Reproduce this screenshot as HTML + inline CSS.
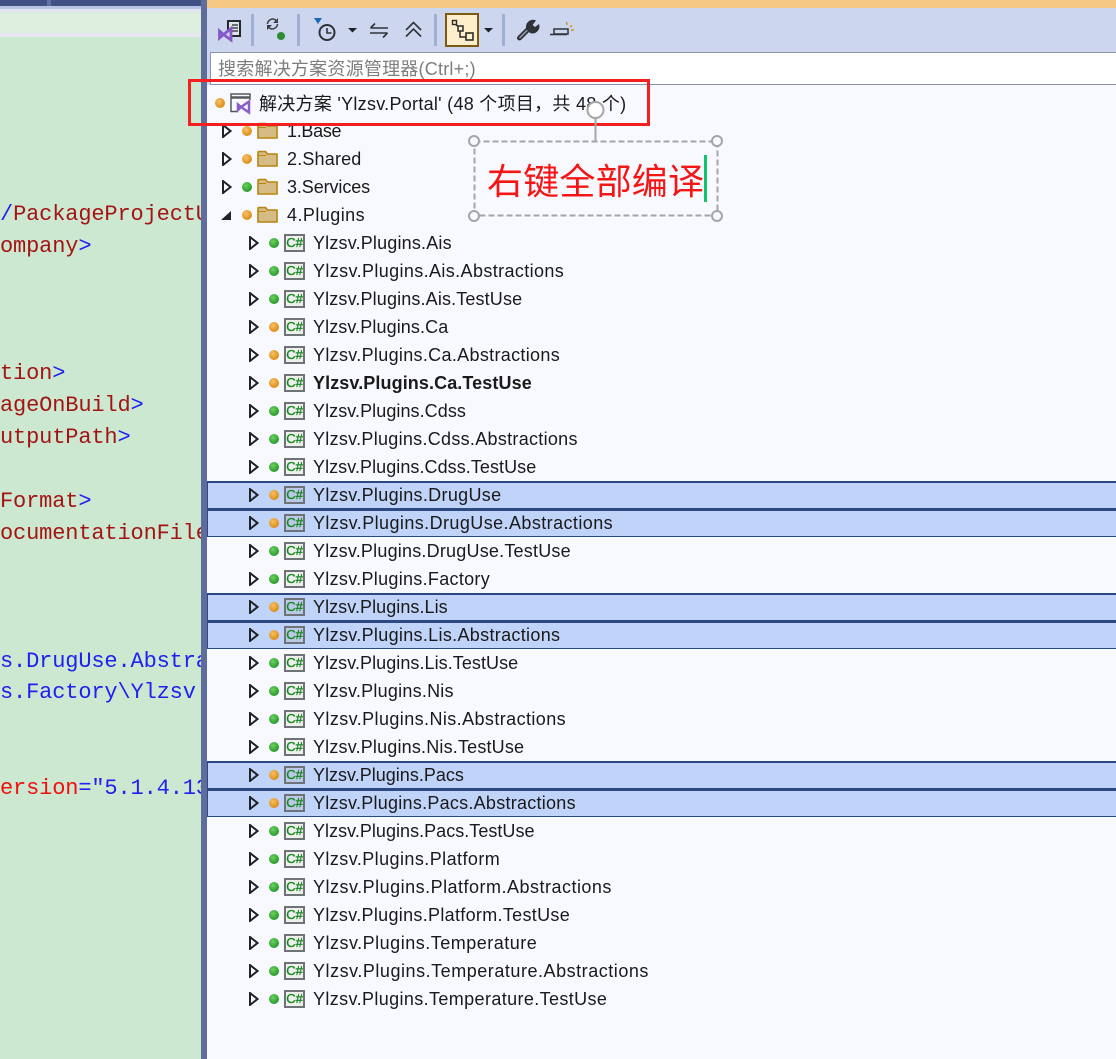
<!DOCTYPE html>
<html lang="zh"><head><meta charset="utf-8"><title>解决方案资源管理器</title>
<style>
html,body{margin:0;padding:0;width:1116px;height:1059px;overflow:hidden;background:#f8f9ff}
body{position:relative;font-family:"Liberation Sans","Noto Sans CJK SC",sans-serif;color:#1a1a1a}
div,span,i,svg{position:absolute;display:block}
#left{left:0;top:0;width:201px;height:1059px;background:#cde8d0;overflow:hidden}
.c{left:0;font:22px/32px "Liberation Mono",monospace;white-space:pre;color:#a31515;letter-spacing:-.15px}
.c b{position:static;font-weight:normal;color:#2020f0}
.c em{font-style:normal;color:#f01010}
.r{left:207px;width:909px;height:28px}
.r svg.a{left:41px;top:7px;width:11px;height:14px}
.r i{left:62px;top:9px;width:10px;height:10px;border-radius:50%}
.g{background:radial-gradient(circle at 40% 35%,#6ad35e,#2c9a2c 70%)}
.o{background:radial-gradient(circle at 40% 35%,#f7c163,#db8f1b 70%)}
.cs{left:77px;top:5px;width:17px;height:14px;border:2px solid #6f7378;background:#eef0ee;color:#18881f;font:13px/14px "Liberation Sans",sans-serif;-webkit-text-stroke:.35px #18881f;text-align:center}
.t{left:106px;top:0;font-size:18px;line-height:28px;white-space:nowrap;letter-spacing:.18px}
.r.s{background:#c0d3f8;height:25px;border-top:2px solid #2c4a80;border-bottom:1px solid #2c4a80;box-shadow:inset 1px 0 #2c4a80}
.r.s svg.a{top:5px}.r.s i{top:7px}.r.s .cs{top:3px;background:#b9c9e6}.r.s .t{top:-2px}
.r.f svg.a{left:14px}.r.f i{left:35px}.f svg.fd{left:50px;top:5px;width:21px;height:17px}.r.f .t{left:80px}
</style></head><body>
<svg width="0" height="0" style="position:absolute"><defs>
<symbol id="ar" viewBox="0 0 11 14"><path d="M2 1 L9.500 7 L2 13Z" fill="none" stroke="#1f2328" stroke-width="2"/></symbol>
<symbol id="fo" viewBox="0 0 21 17"><path d="M1 2 V16 H20 V4 H10.500 L8.500 1.500 H2Z" fill="#d4bc84" stroke="#b8860f" stroke-width="1.600"/><path d="M1 5.500 H9" stroke="#b8860f" stroke-width="1"/></symbol>
</defs></svg>

<div id="left">
<div style="left:0;top:0;width:201px;height:6px;background:#3f5185"></div>
<div style="left:47px;top:0;width:4px;height:6px;background:#5f71a5"></div>
<div style="left:0;top:6px;width:201px;height:3px;background:#b9c3e6"></div>
<div style="left:0;top:9px;width:201px;height:3px;background:#e2e5f0"></div>
<div style="left:0;top:12px;width:201px;height:21px;background:#dcefdf"></div>
<div style="left:0;top:33px;width:201px;height:4px;background:#e8e8f2"></div>
<div class="c" style="top:199px"><b>/</b>PackageProjectU</div>
<div class="c" style="top:231px">ompany<b>&gt;</b></div>
<div class="c" style="top:358px">tion<b>&gt;</b></div>
<div class="c" style="top:390px">ageOnBuild<b>&gt;</b></div>
<div class="c" style="top:422px">utputPath<b>&gt;</b></div>
<div class="c" style="top:486px">Format<b>&gt;</b></div>
<div class="c" style="top:518px">ocumentationFile</div>
<div class="c" style="top:646px"><b>s.DrugUse.Abstra</b></div>
<div class="c" style="top:677px"><b>s.Factory\Ylzsv.</b></div>
<div class="c" style="top:773px"><em>ersion</em><b>=″5.1.4.13</b></div>
</div>
<div style="left:201px;top:0;width:6px;height:1059px;background:#5e6d9c"></div>

<div style="left:207px;top:0;width:909px;height:8px;background:#f3c983"></div>
<div style="left:207px;top:8px;width:909px;height:44px;background:#ccd6ef"></div>
<div style="left:207px;top:52px;width:909px;height:36px;background:#ccd6ef"></div>
<div style="left:210px;top:52px;width:906px;height:31px;background:#fff;border-top:1px solid #8d94aa;border-left:1px solid #8d94aa;border-bottom:1px solid #8d94aa"></div>
<div style="left:218px;top:57px;font-size:18px;line-height:24px;color:#7d7d7d;white-space:nowrap;letter-spacing:.23px">搜索解决方案资源管理器(Ctrl+;)</div>

<svg style="left:207px;top:8px" width="400" height="44" viewBox="207 8 400 44">
<rect x="251" y="14" width="3" height="32" fill="#9fb0d4"/><rect x="297" y="14" width="3" height="32" fill="#9fb0d4"/><rect x="434" y="14" width="3" height="32" fill="#9fb0d4"/><rect x="502" y="14" width="3" height="32" fill="#9fb0d4"/>
<rect x="228" y="21" width="12" height="15" fill="#dfe3ea" stroke="#26282c" stroke-width="2"/><path d="M232 25h6M232 28h6M232 31h6" stroke="#26282c" stroke-width="1.300"/>
<path d="M219.500 31 L223.500 34.500 L231 28.500 V40 L223.500 34.500 L219.500 38Z" fill="#ccd6ef" stroke="#8657c9" stroke-width="2.800"/>
<path d="M267.500 24 A5.200 5.200 0 0 1 276 20.300 M277.500 24 A5.200 5.200 0 0 1 269 27.700" fill="none" stroke="#3b3f44" stroke-width="1.500"/><path d="M278 18v5h-5zM267 30v-5h5z" fill="#3b3f44"/>
<circle cx="281" cy="36" r="4" fill="#2e8b36"/>
<path d="M314 18h8l-4 6z" fill="#1f68b4"/>
<circle cx="327" cy="32.500" r="7.500" fill="#ccd6ef" stroke="#2f3338" stroke-width="2"/><path d="M327 28v5h4.500" fill="none" stroke="#2f3338" stroke-width="1.600"/>
<path d="M348 28h9l-4.500 4.500z" fill="#1f2328"/>
<path d="M370.500 28H388M375 23.500L370.500 28M370 33H387.500M383 37.500L387.500 33" fill="none" stroke="#2f3338" stroke-width="1.600"/>
<path d="M406 30L413.500 22.500L421 30M406 36.500L413.500 29L421 36.500" fill="none" stroke="#2f3338" stroke-width="1.600"/>
<rect x="446" y="14" width="32" height="32" fill="#ffeecb" stroke="#7c5a12" stroke-width="2"/>
<path d="M454 23L460 28V37H466" fill="none" stroke="#2b2b2b" stroke-width="1.500"/><rect x="452.500" y="20.500" width="4" height="4" fill="#ffeecb" stroke="#2b2b2b" stroke-width="1.400"/><rect x="458" y="26" width="5" height="5" fill="#ffeecb" stroke="#2b2b2b" stroke-width="1.500"/><rect x="466" y="33" width="7" height="7" fill="#ffeecb" stroke="#2b2b2b" stroke-width="1.600"/>
<path d="M484 28h9l-4.500 4.500z" fill="#1f2328"/>
<path d="M519.500 38L531 26.500" stroke="#2f3338" stroke-width="5" stroke-linecap="round"/><path d="M519.500 38L530 27.500" stroke="#9aa2b0" stroke-width="1.500"/>
<path d="M536 20.500 A7 7 0 0 0 526.500 29.500 L530 33 A7 7 0 0 0 539 24 L535 27 L532.500 25Z" fill="#2f3338"/>
<rect x="554" y="29" width="14" height="5" fill="#ccd6ef" stroke="#2f3338" stroke-width="1.500"/><path d="M550 34.500h17" stroke="#2f3338" stroke-width="1.500"/>
<path d="M566.500 22l.5 3M570 27l2-1.500M571 30h3" stroke="#c9962b" stroke-width="1.500"/>
</svg>

<div style="left:207px;top:85px;width:909px;height:974px;background:#f8f9ff"></div>

<div class="r" style="top:90px;height:28px"><i class="o" style="left:8px;top:8px"></i>
<svg style="left:23px;top:3px" width="22" height="22" viewBox="0 0 22 22"><path d="M8 18.500H1V1H20V7" fill="none" stroke="#55595f" stroke-width="1.500"/><path d="M1 4.500H20" stroke="#55595f" stroke-width="2.500"/><path d="M8 11.500L11 14L19 8.500V19.500L11 14L8 17Z" fill="none" stroke="#8a5fc8" stroke-width="2.500"/></svg>
<div class="t" style="left:52px;top:0;letter-spacing:.28px">解决方案 'Ylzsv.Portal' (48 个项目，共 48 个)</div></div>

<div class="r f" style="top:117px"><svg class="a"><use href="#ar"/></svg><i class="o"></i><svg class="fd"><use href="#fo"/></svg><div class="t" style="letter-spacing:-.3px">1.Base</div></div>
<div class="r f" style="top:145px"><svg class="a"><use href="#ar"/></svg><i class="o"></i><svg class="fd"><use href="#fo"/></svg><div class="t">2.Shared</div></div>
<div class="r f" style="top:173px"><svg class="a"><use href="#ar"/></svg><i class="g"></i><svg class="fd"><use href="#fo"/></svg><div class="t" style="letter-spacing:-.1px">3.Services</div></div>
<div class="r f" style="top:201px"><svg class="a" viewBox="0 0 11 14"><path d="M0 12 L10 3 V12Z" fill="#1f2328"/></svg><i class="o"></i><svg class="fd"><use href="#fo"/></svg><div class="t" style="letter-spacing:.45px">4.Plugins</div></div>

<div class="r" style="top:229px"><svg class="a"><use href="#ar"/></svg><i class="g"></i><div class="cs">C#</div><div class="t">Ylzsv.Plugins.Ais</div></div>
<div class="r" style="top:257px"><svg class="a"><use href="#ar"/></svg><i class="g"></i><div class="cs">C#</div><div class="t" style="letter-spacing:.38px">Ylzsv.Plugins.Ais.Abstractions</div></div>
<div class="r" style="top:285px"><svg class="a"><use href="#ar"/></svg><i class="g"></i><div class="cs">C#</div><div class="t" style="letter-spacing:.14px">Ylzsv.Plugins.Ais.TestUse</div></div>
<div class="r" style="top:313px"><svg class="a"><use href="#ar"/></svg><i class="o"></i><div class="cs">C#</div><div class="t" style="letter-spacing:.1px">Ylzsv.Plugins.Ca</div></div>
<div class="r" style="top:341px"><svg class="a"><use href="#ar"/></svg><i class="o"></i><div class="cs">C#</div><div class="t" style="letter-spacing:.32px">Ylzsv.Plugins.Ca.Abstractions</div></div>
<div class="r" style="top:369px"><svg class="a"><use href="#ar"/></svg><i class="o"></i><div class="cs">C#</div><div class="t" style="font-weight:bold;letter-spacing:.1px">Ylzsv.Plugins.Ca.TestUse</div></div>
<div class="r" style="top:397px"><svg class="a"><use href="#ar"/></svg><i class="g"></i><div class="cs">C#</div><div class="t" style="letter-spacing:.07px">Ylzsv.Plugins.Cdss</div></div>
<div class="r" style="top:425px"><svg class="a"><use href="#ar"/></svg><i class="g"></i><div class="cs">C#</div><div class="t" style="letter-spacing:.29px">Ylzsv.Plugins.Cdss.Abstractions</div></div>
<div class="r" style="top:453px"><svg class="a"><use href="#ar"/></svg><i class="g"></i><div class="cs">C#</div><div class="t" style="letter-spacing:.06px">Ylzsv.Plugins.Cdss.TestUse</div></div>
<div class="r s" style="top:481px"><svg class="a"><use href="#ar"/></svg><i class="o"></i><div class="cs">C#</div><div class="t" style="letter-spacing:.32px">Ylzsv.Plugins.DrugUse</div></div>
<div class="r s" style="top:509px"><svg class="a"><use href="#ar"/></svg><i class="o"></i><div class="cs">C#</div><div class="t" style="letter-spacing:.42px">Ylzsv.Plugins.DrugUse.Abstractions</div></div>
<div class="r" style="top:537px"><svg class="a"><use href="#ar"/></svg><i class="g"></i><div class="cs">C#</div><div class="t" style="letter-spacing:.21px">Ylzsv.Plugins.DrugUse.TestUse</div></div>
<div class="r" style="top:565px"><svg class="a"><use href="#ar"/></svg><i class="g"></i><div class="cs">C#</div><div class="t" style="letter-spacing:.3px">Ylzsv.Plugins.Factory</div></div>
<div class="r s" style="top:593px"><svg class="a"><use href="#ar"/></svg><i class="o"></i><div class="cs">C#</div><div class="t" style="letter-spacing:.06px">Ylzsv.Plugins.Lis</div></div>
<div class="r s" style="top:621px"><svg class="a"><use href="#ar"/></svg><i class="o"></i><div class="cs">C#</div><div class="t" style="letter-spacing:.32px">Ylzsv.Plugins.Lis.Abstractions</div></div>
<div class="r" style="top:649px"><svg class="a"><use href="#ar"/></svg><i class="g"></i><div class="cs">C#</div><div class="t" style="letter-spacing:.06px">Ylzsv.Plugins.Lis.TestUse</div></div>
<div class="r" style="top:677px"><svg class="a"><use href="#ar"/></svg><i class="g"></i><div class="cs">C#</div><div class="t" style="letter-spacing:.24px">Ylzsv.Plugins.Nis</div></div>
<div class="r" style="top:705px"><svg class="a"><use href="#ar"/></svg><i class="g"></i><div class="cs">C#</div><div class="t" style="letter-spacing:.41px">Ylzsv.Plugins.Nis.Abstractions</div></div>
<div class="r" style="top:733px"><svg class="a"><use href="#ar"/></svg><i class="g"></i><div class="cs">C#</div><div class="t">Ylzsv.Plugins.Nis.TestUse</div></div>
<div class="r s" style="top:761px"><svg class="a"><use href="#ar"/></svg><i class="o"></i><div class="cs">C#</div><div class="t" style="letter-spacing:.01px">Ylzsv.Plugins.Pacs</div></div>
<div class="r s" style="top:789px"><svg class="a"><use href="#ar"/></svg><i class="o"></i><div class="cs">C#</div><div class="t" style="letter-spacing:.26px">Ylzsv.Plugins.Pacs.Abstractions</div></div>
<div class="r" style="top:817px"><svg class="a"><use href="#ar"/></svg><i class="g"></i><div class="cs">C#</div><div class="t" style="letter-spacing:.03px">Ylzsv.Plugins.Pacs.TestUse</div></div>
<div class="r" style="top:845px"><svg class="a"><use href="#ar"/></svg><i class="g"></i><div class="cs">C#</div><div class="t" style="letter-spacing:.43px">Ylzsv.Plugins.Platform</div></div>
<div class="r" style="top:873px"><svg class="a"><use href="#ar"/></svg><i class="g"></i><div class="cs">C#</div><div class="t" style="letter-spacing:.49px">Ylzsv.Plugins.Platform.Abstractions</div></div>
<div class="r" style="top:901px"><svg class="a"><use href="#ar"/></svg><i class="g"></i><div class="cs">C#</div><div class="t" style="letter-spacing:.31px">Ylzsv.Plugins.Platform.TestUse</div></div>
<div class="r" style="top:929px"><svg class="a"><use href="#ar"/></svg><i class="g"></i><div class="cs">C#</div><div class="t" style="letter-spacing:.5px">Ylzsv.Plugins.Temperature</div></div>
<div class="r" style="top:957px"><svg class="a"><use href="#ar"/></svg><i class="g"></i><div class="cs">C#</div><div class="t" style="letter-spacing:.53px">Ylzsv.Plugins.Temperature.Abstractions</div></div>
<div class="r" style="top:985px"><svg class="a"><use href="#ar"/></svg><i class="g"></i><div class="cs">C#</div><div class="t" style="letter-spacing:.38px">Ylzsv.Plugins.Temperature.TestUse</div></div>

<div style="left:188px;top:79px;width:456px;height:41px;border:3px solid #f41f1f"></div>

<svg style="left:460px;top:95px" width="270" height="135" viewBox="460 95 270 135">
<rect x="474.500" y="141.500" width="243" height="74" fill="none" stroke="#a5a5a5" stroke-width="2" stroke-dasharray="6 3"/>
<path d="M595.500 118V141" stroke="#a5a5a5" stroke-width="2"/>
<circle cx="595.500" cy="110" r="8" fill="#fff" stroke="#a5a5a5" stroke-width="2"/>
<g fill="#f8f9ff" stroke="#a5a5a5" stroke-width="2"><circle cx="474" cy="141" r="5"/><circle cx="717" cy="141" r="5"/><circle cx="474" cy="216" r="5"/><circle cx="717" cy="216" r="5"/></g>
<rect x="704" y="155" width="3" height="47" fill="#12c46b"/>
</svg>
<div style="left:487px;top:159px;font-size:36px;line-height:46px;color:#f41515;white-space:nowrap;letter-spacing:.2px">右键全部编译</div>
</body></html>
